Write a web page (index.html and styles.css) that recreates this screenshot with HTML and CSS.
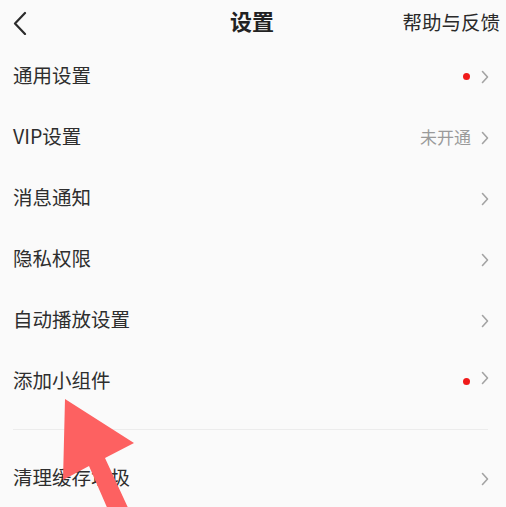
FILE: index.html
```html
<!DOCTYPE html>
<html lang="zh-CN">
<head>
<meta charset="utf-8">
<link rel="stylesheet" href="styles.css">
</head>
<body>
<div class="page">
  <header class="topbar">
    <svg class="back" width="16" height="24" viewBox="0 0 16 24"><path d="M13 2 L3 12.5 L13 23" fill="none" stroke="#2b2b2b" stroke-width="2.2" stroke-linecap="round" stroke-linejoin="round"/></svg>
    <div class="title">设置</div>
    <div class="help">帮助与反馈</div>
  </header>
  <ul class="list">
    <li class="row"><span class="label">通用设置</span><span class="right"><i class="dot"></i><svg class="chev" width="8" height="14" viewBox="0 0 8 14"><path d="M1.5 1.5 L6.5 7 L1.5 12.5" fill="none" stroke="#a3a3a3" stroke-width="1.6" stroke-linecap="round" stroke-linejoin="round"/></svg></span></li>
    <li class="row"><span class="label">VIP设置</span><span class="right"><span class="note">未开通</span><svg class="chev" width="8" height="14" viewBox="0 0 8 14"><path d="M1.5 1.5 L6.5 7 L1.5 12.5" fill="none" stroke="#a3a3a3" stroke-width="1.6" stroke-linecap="round" stroke-linejoin="round"/></svg></span></li>
    <li class="row"><span class="label">消息通知</span><span class="right"><svg class="chev" width="8" height="14" viewBox="0 0 8 14"><path d="M1.5 1.5 L6.5 7 L1.5 12.5" fill="none" stroke="#a3a3a3" stroke-width="1.6" stroke-linecap="round" stroke-linejoin="round"/></svg></span></li>
    <li class="row"><span class="label">隐私权限</span><span class="right"><svg class="chev" width="8" height="14" viewBox="0 0 8 14"><path d="M1.5 1.5 L6.5 7 L1.5 12.5" fill="none" stroke="#a3a3a3" stroke-width="1.6" stroke-linecap="round" stroke-linejoin="round"/></svg></span></li>
    <li class="row"><span class="label">自动播放设置</span><span class="right"><svg class="chev" width="8" height="14" viewBox="0 0 8 14"><path d="M1.5 1.5 L6.5 7 L1.5 12.5" fill="none" stroke="#a3a3a3" stroke-width="1.6" stroke-linecap="round" stroke-linejoin="round"/></svg></span></li>
    <li class="row"><span class="label">添加小组件</span><span class="right"><i class="dot"></i><svg class="chev up" width="8" height="14" viewBox="0 0 8 14"><path d="M1.5 1.5 L6.5 7 L1.5 12.5" fill="none" stroke="#a3a3a3" stroke-width="1.6" stroke-linecap="round" stroke-linejoin="round"/></svg></span></li>
  </ul>
  <div class="divider"></div>
  <ul class="list">
    <li class="row"><span class="label">清理缓存垃圾</span><span class="right"><svg class="chev" width="8" height="14" viewBox="0 0 8 14"><path d="M1.5 1.5 L6.5 7 L1.5 12.5" fill="none" stroke="#a3a3a3" stroke-width="1.6" stroke-linecap="round" stroke-linejoin="round"/></svg></span></li>
  </ul>
  <svg class="arrow" width="506" height="507" viewBox="0 0 506 507"><polygon points="65,399 134,443 105,458 130,512 109,512 89,466 63,480" fill="#fd6161"/></svg>
</div>
</body>
</html>
```

FILE: styles.css
```css
html, body {
  margin: 0;
  padding: 0;
  background: #fafafa;
}
.page {
  position: relative;
  width: 506px;
  height: 507px;
  overflow: hidden;
  font-family: "Noto Sans CJK SC", "Noto Sans", sans-serif;
  color: #2e2e2e;
}
.topbar {
  height: 46px;
  display: grid;
  grid-template-columns: 1fr auto 1fr;
  align-items: center;
  padding: 0 6px 0 12px;
}
.back {
  display: block;
}
.title {
  font-size: 22px;
  font-weight: 700;
  color: #222;
  line-height: 1;
  padding: 0 8px 6px 0;
}
.help {
  justify-self: end;
  font-size: 19.5px;
  line-height: 1;
  color: #2a2a2a;
  padding-bottom: 2px;
}
.list {
  list-style: none;
  margin: 0;
  padding: 0;
}
.row {
  height: 61px;
  display: flex;
  align-items: center;
  justify-content: space-between;
  padding: 0 17px 0 13px;
}
.label {
  font-size: 19.5px;
  line-height: 1;
  padding-bottom: 4px;
}
.right {
  display: flex;
  align-items: center;
}
.dot {
  width: 7px;
  height: 7px;
  border-radius: 50%;
  background: #f01a1a;
  margin-right: 11px;
}
.note {
  font-size: 17px;
  line-height: 1;
  color: #9a9a9a;
  margin-right: 10px;
  padding-bottom: 2px;
}
.chev {
  display: block;
}
.chev.up {
  margin-top: -7px;
}
.divider {
  height: 1px;
  background: #ececec;
  margin: 17px 18px 18px 13px;
}
.arrow {
  position: absolute;
  left: 0;
  top: 0;
  pointer-events: none;
}
```
